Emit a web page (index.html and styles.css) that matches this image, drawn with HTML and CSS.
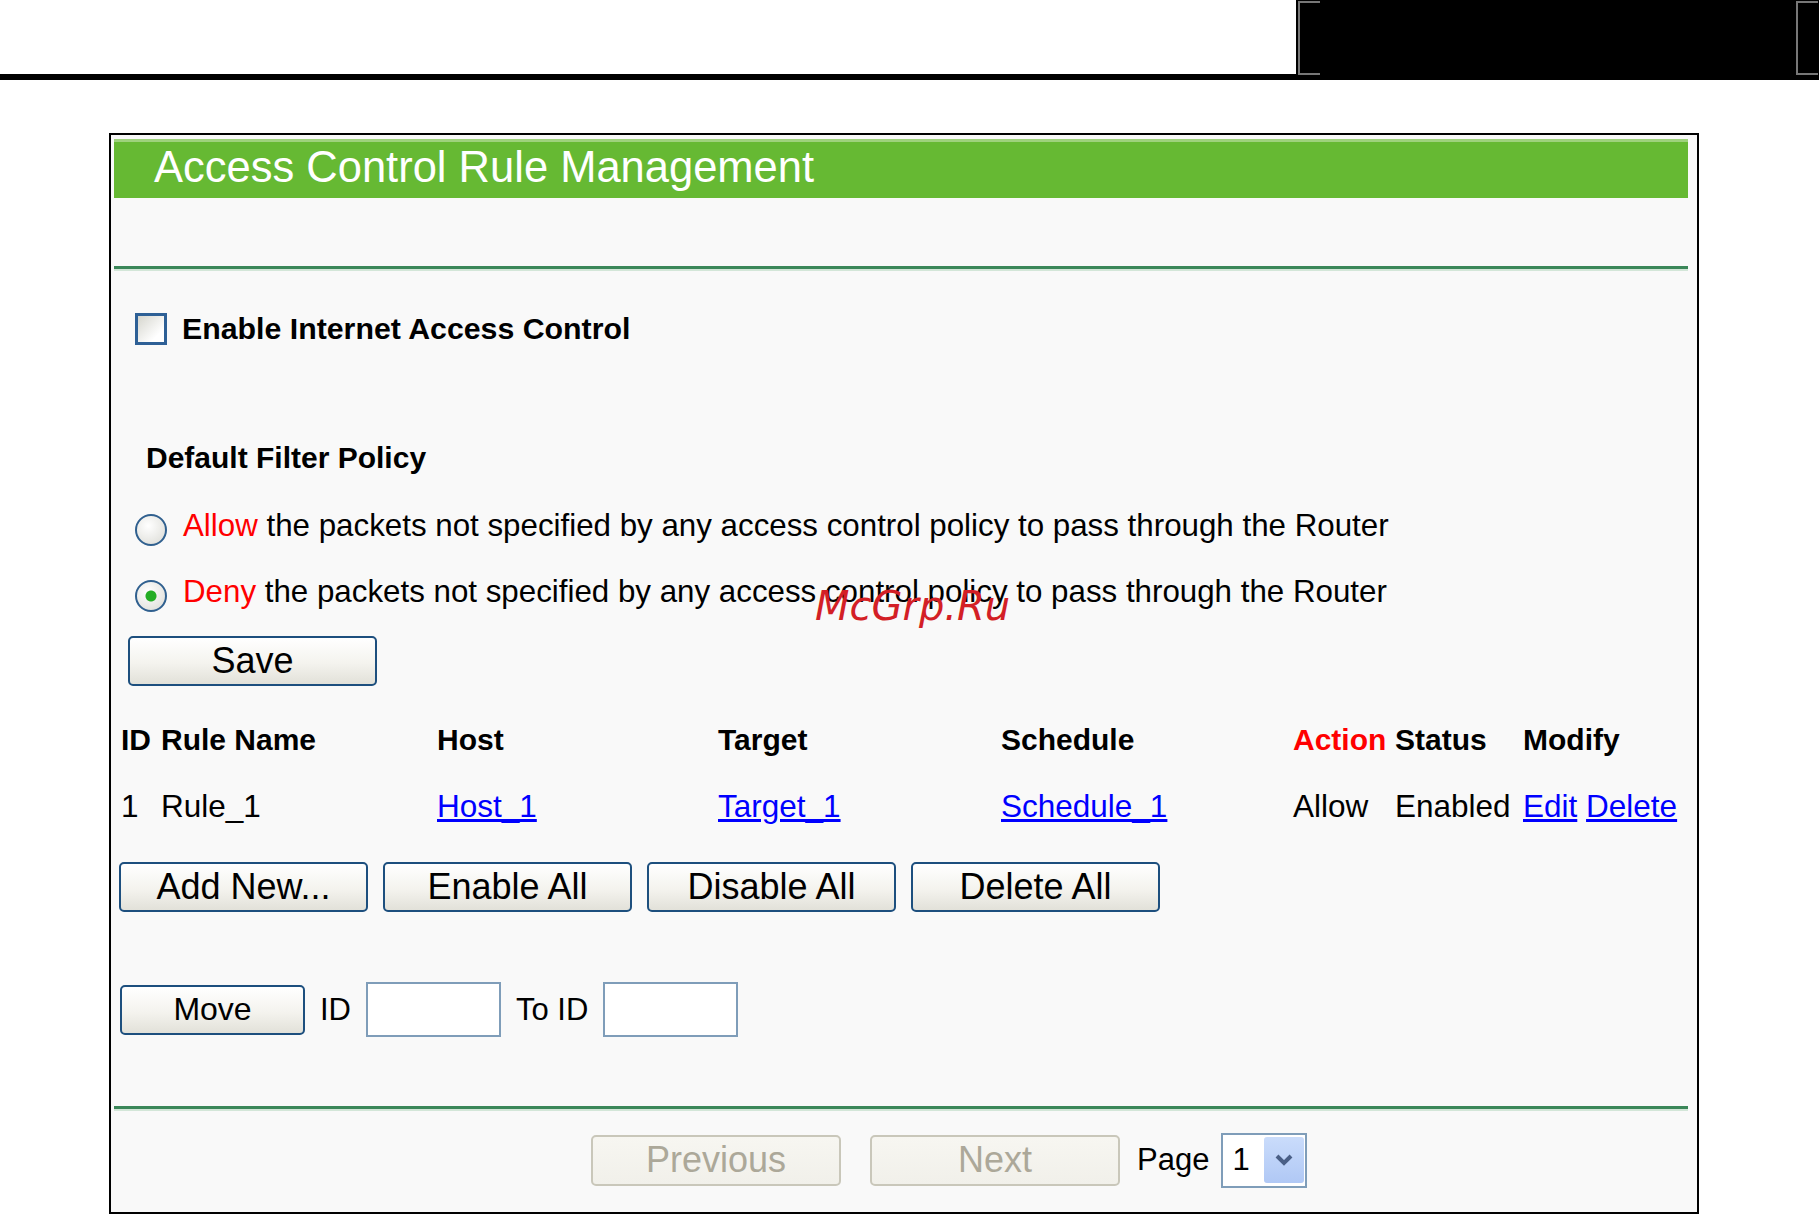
FILE: index.html
```html
<!DOCTYPE html>
<html lang="en">
<head>
    <meta charset="UTF-8">
    <title>Access Control Rule Management</title>
    <link rel="stylesheet" href="styles.css">
</head>
<body>
    <div class="topbar">
        <div class="topbar-line"></div>
        <div class="topbar-block">
            <span class="bracket bracket-left"></span>
            <span class="bracket bracket-right"></span>
        </div>
    </div>

    <div class="panel">
        <div class="title">Access Control Rule Management</div>
        <div class="spacer"></div>
        <div class="divider"></div>

        <div class="enable">
            <span class="checkbox"></span>
            <span>Enable Internet Access Control</span>
        </div>

        <div class="policy-title">Default Filter Policy</div>

        <div class="radio-row first">
            <span class="radio"></span>
            <span><span class="red">Allow</span> the packets not specified by any access control policy to pass through the Router</span>
        </div>
        <div class="radio-row">
            <span class="radio checked"></span>
            <span><span class="red">Deny</span> the packets not specified by any access control policy to pass through the Router</span>
        </div>

        <button type="button" class="btn save-btn">Save</button>

        <div class="rules">
            <div class="th">ID</div>
            <div class="th">Rule Name</div>
            <div class="th">Host</div>
            <div class="th">Target</div>
            <div class="th">Schedule</div>
            <div class="th red">Action</div>
            <div class="th">Status</div>
            <div class="th">Modify</div>

            <div class="td">1</div>
            <div class="td">Rule_1</div>
            <div class="td"><a href="#">Host_1</a></div>
            <div class="td"><a href="#">Target_1</a></div>
            <div class="td"><a href="#">Schedule_1</a></div>
            <div class="td">Allow</div>
            <div class="td">Enabled</div>
            <div class="td"><a href="#">Edit</a> <a href="#">Delete</a></div>
        </div>

        <div class="actions">
            <button type="button" class="btn">Add New...</button>
            <button type="button" class="btn">Enable All</button>
            <button type="button" class="btn">Disable All</button>
            <button type="button" class="btn">Delete All</button>
        </div>

        <div class="move">
            <button type="button" class="btn move-btn">Move</button>
            <span>ID</span>
            <input type="text" class="id-input">
            <span>To ID</span>
            <input type="text" class="id-input">
        </div>

        <div class="divider bottom"></div>

        <div class="pager">
            <button type="button" class="btn disabled" disabled>Previous</button>
            <button type="button" class="btn disabled next-btn" disabled>Next</button>
            <span class="page-label">Page</span>
            <div class="select">
                <span class="select-value">1</span>
                <span class="select-arrow">
                    <svg width="18" height="12" viewBox="0 0 18 12"><path d="M2 2 L9 9 L16 2" fill="none" stroke="#4a5f86" stroke-width="4"/></svg>
                </span>
            </div>
        </div>
    </div>

    <div class="watermark">McGrp.Ru</div>
</body>
</html>
```

FILE: styles.css
```css
body {
    margin: 0;
    background-color: #fff;
    font-family: "Liberation Sans", Arial, sans-serif;
    font-size: 31px;
    color: #000;
    position: relative;
    min-height: 1216px;
}
.topbar {
    display: flex;
    height: 80px;
}
.topbar-line {
    flex: 1;
    border-bottom: 6px solid #000;
}
.topbar-block {
    width: 523px;
    background-color: #000;
    position: relative;
}
.bracket {
    position: absolute;
    top: 1px;
    width: 20px;
    height: 70px;
    border: 2px solid #777;
    border-right: none;
}
.bracket-left {
    left: 2px;
}
.bracket-right {
    left: 500px;
}
.panel {
    box-sizing: border-box;
    width: 1590px;
    margin: 53px 0 0 109px;
    border: 2px solid #000;
    background-color: #f9f9f9;
    padding: 4px 9px 24px 3px;
}
.title {
    box-sizing: border-box;
    height: 59px;
    background-color: #66b933;
    border-top: 3px solid #9ed27c;
    color: #fff;
    font-size: 43.5px;
    line-height: 50px;
    padding-left: 40px;
}
.spacer {
    height: 68px;
}
.divider {
    height: 3px;
    background-color: #3b8759;
    border-bottom: 2px solid #d3e6d8;
}
.divider.bottom {
    margin-top: 69px;
}
.enable {
    display: flex;
    align-items: center;
    gap: 15px;
    height: 32px;
    margin: 42px 0 0 21px;
    font-size: 30.3px;
    font-weight: bold;
    line-height: 28px;
}
.checkbox {
    box-sizing: border-box;
    width: 32px;
    height: 32px;
    border: 3px solid #2e6096;
    background: linear-gradient(135deg, #d6d6ce, #fff 75%);
}
.policy-title {
    margin-top: 95px;
    padding-left: 32px;
    font-size: 30px;
    font-weight: bold;
    line-height: 36px;
}
.radio-row {
    display: flex;
    align-items: flex-start;
    gap: 16px;
    height: 40px;
    margin: 26px 0 0 21px;
    font-size: 31.3px;
    line-height: 32px;
}
.radio-row.first {
    margin-top: 34px;
}
.radio {
    box-sizing: border-box;
    flex: none;
    width: 32px;
    height: 32px;
    margin-top: 4px;
    border-radius: 50%;
    border: 2px solid #30608f;
    background: radial-gradient(circle at 40% 35%, #fff, #dadad4);
}
.radio.checked {
    background: radial-gradient(circle, #24ad24 0, #24ad24 5px, transparent 6px),
                radial-gradient(circle at 40% 35%, #fff, #dadad4);
}
.red {
    color: #f00;
}
.btn {
    box-sizing: border-box;
    width: 249px;
    height: 50px;
    padding: 0;
    border: 2px solid #1d4f7e;
    border-radius: 5px;
    background: linear-gradient(#fff, #f4f3ee 55%, #e2e1d9);
    font-family: "Liberation Sans", Arial, sans-serif;
    font-size: 36px;
    color: #000;
}
.save-btn {
    display: block;
    margin: 20px 0 0 14px;
}
.rules {
    display: grid;
    grid-template-columns: 40px 276px 281px 283px 292px 102px 128px auto;
    row-gap: 26px;
    margin: 34px 0 0 7px;
    line-height: 40px;
}
.th {
    font-size: 30px;
    font-weight: bold;
}
.td {
    font-size: 31.5px;
    white-space: nowrap;
}
.td a {
    color: #00f;
    text-decoration: underline;
}
.actions {
    display: flex;
    gap: 15px;
    margin: 36px 0 0 5px;
}
.move {
    display: flex;
    align-items: center;
    gap: 15px;
    height: 55px;
    margin: 70px 0 0 6px;
}
.move-btn {
    width: 185px;
    font-size: 32px;
}
.id-input {
    box-sizing: border-box;
    width: 135px;
    height: 55px;
    border: 2px solid #7f9db9;
    background-color: #fff;
    margin: 0;
}
.pager {
    display: flex;
    align-items: center;
    height: 56px;
    margin-top: 21px;
    padding-left: 477px;
}
.btn.disabled {
    width: 250px;
    height: 51px;
    border-color: #c9c7ba;
    background: linear-gradient(#f7f6f1, #f1f0ea);
    color: #aca899;
}
.next-btn {
    margin-left: 29px;
}
.page-label {
    margin: 0 12px 0 17px;
}
.select {
    box-sizing: border-box;
    display: flex;
    align-items: center;
    width: 86px;
    height: 55px;
    padding: 2px 1px 2px 9px;
    border: 2px solid #7f9db9;
    background-color: #fff;
}
.select-arrow {
    display: flex;
    align-items: center;
    justify-content: center;
    width: 40px;
    height: 46px;
    margin-left: auto;
    border-radius: 3px;
    background: linear-gradient(#cadcfb, #b0c8f5);
}
.watermark {
    position: absolute;
    left: 815px;
    top: 586px;
    font-family: "DejaVu Sans", sans-serif;
    font-style: italic;
    font-size: 40px;
    line-height: 1;
    color: #d31f26;
}
```
